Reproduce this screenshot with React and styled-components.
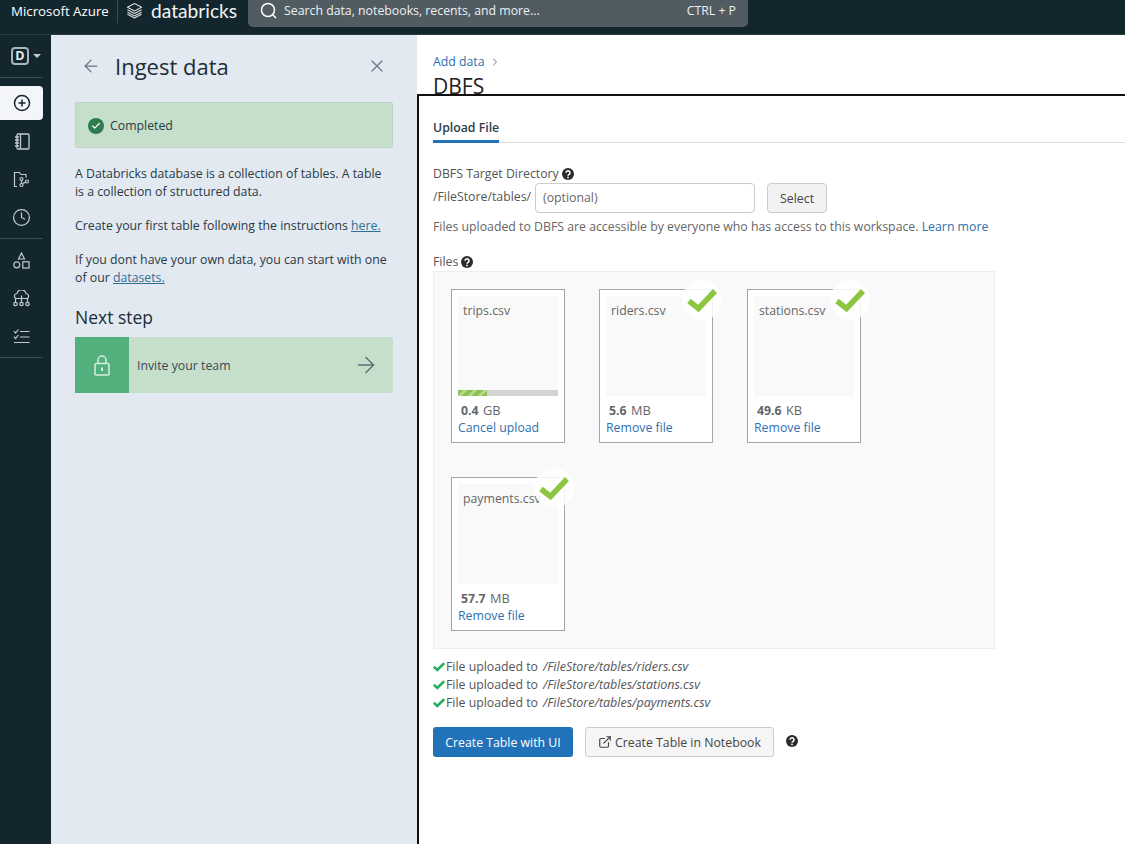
import styled, { createGlobalStyle } from 'styled-components';
import { ArrowLeft, ArrowRight, X, Check, ChevronRight, CirclePlus, Clock, ExternalLink } from 'lucide-react';

const GlobalStyle = createGlobalStyle`
  html, body { margin: 0; padding: 0; height: 100%; overflow: hidden; background: #fff; }
  body { font-family: "Open Sans", "Noto Sans", sans-serif; font-size: 12.3px; color: #333; }
  * { box-sizing: border-box; }
`

const Page = styled.div`
  width: 1125px;
  height: 844px;
  display: flex;
  flex-direction: column;
  overflow: hidden;
`

const TopBar = styled.header`
  height: 35px;
  flex: none;
  background: #13262e;
  border-bottom: 1px solid #2b3b42;
  display: flex;
  align-items: flex-start;
  color: #fff;
`

const Azure = styled.div`
  width: 118px;
  height: 23px;
  padding-left: 11px;
  font-size: 13.3px;
  line-height: 22px;
  border-right: 1px solid #3a4a51;
  white-space: nowrap;
`

const Brand = styled.div`
  width: 130px;
  height: 23px;
  display: flex;
  align-items: center;
  padding: 0 0 2px 8px;
  gap: 8px;
  font-family: "Lato", sans-serif;
  font-size: 19.2px;
  line-height: 21px;
  color: #f2f4f5;
`

const SearchBox = styled.div`
  width: 500px;
  height: 27px;
  background: #515c62;
  border-radius: 0 0 5px 5px;
  display: flex;
  align-items: center;
  padding: 0 12px 6px;
  gap: 7px;
  color: #eef1f2;
`

const SearchText = styled.span`
  flex: 1;
`

const Body = styled.div`
  flex: 1;
  display: flex;
  min-height: 0;
`

const Rail = styled.nav`
  width: 51px;
  flex: none;
  background: #13262e;
  color: #c3cbd0;
`

const WorkspaceRow = styled.div`
  height: 43px;
  width: 43px;
  display: flex;
  align-items: center;
  padding-left: 11px;
  gap: 4px;
  border-bottom: 1px solid #3d4c53;
`

const WorkspaceBadge = styled.div`
  width: 18px;
  height: 18px;
  border: 2px solid #a9b5bb;
  border-radius: 4px;
  color: #e4e8ea;
  font-size: 12.5px;
  font-weight: 700;
  line-height: 14px;
  text-align: center;
`

const Caret = styled.span`
  width: 0;
  height: 0;
  border-left: 4px solid transparent;
  border-right: 4px solid transparent;
  border-top: 4px solid #c3cbd0;
`

const RailGroup = styled.div`
  width: 43px;
  padding: ${(props) => props.first ? '8px 0 4px' : '4px 0'};
  display: flex;
  flex-direction: column;
  gap: 4px;
  border-bottom: 1px solid #3d4c53;
`

const RailItem = styled.div`
  width: 43px;
  height: 34px;
  display: flex;
  align-items: center;
  justify-content: center;
  background: ${(props) => props.active ? '#f3f5f8' : 'transparent'};
  color: ${(props) => props.active ? '#13262e' : '#c3cbd0'};
  border-radius: ${(props) => props.active ? '0 4px 4px 0' : '0'};
`

const Panel = styled.aside`
  width: 366px;
  flex: none;
  background: #e2e9f1;
  padding: 0 24px;
  line-height: 18px;
  color: #2a3a44;
`

const PanelHead = styled.div`
  height: 67px;
  padding-bottom: 6px;
  display: flex;
  align-items: center;
  color: #667784;
`

const PanelTitle = styled.h1`
  flex: 1;
  margin: 0 0 0 14px;
  font-size: 22px;
  font-weight: 500;
  color: #1f2d37;
`

const BackBtn = styled.span`
  display: flex;
  padding-left: 6px;
`

const CloseBtn = styled.span`
  display: flex;
  padding-right: 6px;
`

const Alert = styled.div`
  height: 46px;
  background: #c6dfcb;
  border: 1px solid #bed3c8;
  border-radius: 2px;
  display: flex;
  align-items: center;
  padding: 1px 0 0 12px;
  gap: 6px;
  color: #2a3a44;
`

const AlertDot = styled.span`
  width: 16px;
  height: 16px;
  border-radius: 50%;
  background: #2f7d4f;
  color: #fff;
  display: flex;
  align-items: center;
  justify-content: center;
`

const Para = styled.p`
  margin: ${(props) => props.first ? '17px 0 16px' : '0 0 16px'};

  a { color: #2f6f96; text-decoration: underline; }
`

const NextTitle = styled.h2`
  margin: 18px 0 8px;
  font-size: 17.5px;
  line-height: 24px;
  font-weight: 500;
  color: #1f2d37;
`

const StepCard = styled.div`
  height: 56px;
  background: #c6dfcb;
  border-radius: 2px;
  display: flex;
  align-items: center;
  color: #3a4853;
`

const StepIcon = styled.div`
  width: 54px;
  height: 56px;
  background: #51b07c;
  color: #d5eddd;
  display: flex;
  align-items: center;
  justify-content: center;
`

const StepText = styled.span`
  flex: 1;
  padding: 1px 0 0 8px;
`

const StepArrow = styled.span`
  display: flex;
  padding-right: 14px;
  color: #5f6f7c;
`

const Main = styled.main`
  flex: 1;
  min-width: 0;
  display: flex;
  flex-direction: column;
`

const MainHead = styled.div`
  height: 59px;
  flex: none;
  overflow: hidden;
  padding: 18px 0 0 16px;
`

const Crumb = styled.div`
  display: flex;
  align-items: center;
  gap: 4px;
  line-height: 18px;
  color: #2f70b0;
`

const PageTitle = styled.h2`
  margin: 1px 0 0;
  font-size: 21px;
  line-height: 28px;
  font-weight: 500;
  color: #222;
`

const Frame = styled.div`
  flex: 1;
  border-top: 2px solid #111;
  border-left: 2px solid #111;
  padding-left: 14px;
`

const Tabs = styled.div`
  height: 47px;
  border-bottom: 1px solid #ddd;
  display: flex;
  align-items: flex-end;
`

const Tab = styled.div`
  height: 30px;
  padding-top: 5px;
  margin-bottom: -1px;
  font-weight: 600;
  line-height: 20px;
  color: #2c3e4a;
  border-bottom: 3px solid #2272b9;
`

const Label = styled.div`
  margin-top: 22px;
  height: 18px;
  line-height: 18px;
  display: flex;
  align-items: center;
  gap: 3px;
  color: #555;
`

const DirRow = styled.div`
  display: flex;
  align-items: center;
  gap: 4px;
  height: 30px;
  color: #555;
`

const DirPrefix = styled.span`
  padding-bottom: 4px;
`

const DirInput = styled.div`
  width: 220px;
  height: 30px;
  border: 1px solid #ccc;
  border-radius: 4px;
  padding-left: 7px;
  line-height: 28px;
  color: #666;
`

const SelectBtn = styled.button`
  margin-left: 8px;
  width: 60px;
  height: 30px;
  padding: 0;
  background: #f2f2f2;
  border: 1px solid #ccc;
  border-radius: 4px;
  font: inherit;
  color: #444;
`

const Hint = styled.div`
  margin-top: 5px;
  line-height: 18px;
  color: #666;

  a { color: #2f70b0; }
`

const FilesLabel = styled(Label)`
  margin-top: 17px;
`

const DropZone = styled.div`
  width: 562px;
  height: 378px;
  padding: 17px;
  background: #f9f9f9;
  border: 1px solid #eee;
  display: grid;
  grid-template-columns: repeat(auto-fill, 114px);
  grid-auto-rows: 154px;
  column-gap: 34px;
  row-gap: 34px;
`

const FileCard = styled.div`
  position: relative;
  background: #fff;
  border: 1px solid #a6a6a6;
  padding: 6px;
  color: #666;
`

const Thumb = styled.div`
  position: relative;
  height: 100px;
  background: #f9f9f9;
  padding: 6px 5px;
  line-height: 18px;
  white-space: nowrap;
  overflow: hidden;
`

const ProgressTrack = styled.div`
  position: absolute;
  left: 0;
  right: 0;
  bottom: 0;
  height: 6px;
  background: #d3d3d3;
`

const ProgressFill = styled.div`
  height: 100%;
  background: repeating-linear-gradient(-45deg, #8cc152 0 4px, #b5d98e 4px 7px);
`

const Size = styled.div`
  margin: 6px 0 0 3px;
  font-size: 12.8px;
  line-height: 17px;

  b { font-size: 12.3px; font-weight: 700; color: #666; margin-right: 1px; }
`

const CardLink = styled.a`
  display: block;
  line-height: 17px;
  color: #2f70b0;
`

const CheckBubble = styled.div`
  position: absolute;
  top: -10px;
  right: -10px;
  width: 40px;
  height: 40px;
  border-radius: 50%;
  background: rgba(255, 255, 255, 0.85);
  display: flex;
  align-items: center;
  justify-content: center;
`

const Uploads = styled.div`
  margin-top: 9px;
  line-height: 18px;
  color: #555;
`

const UploadRow = styled.div`
  display: flex;
  align-items: center;
  gap: 1px;
  height: 18px;

  em { margin-left: 4px; font-size: 12.5px; }
`

const Actions = styled.div`
  margin-top: 15px;
  display: flex;
  align-items: flex-start;
  gap: 12px;
`

const PrimaryBtn = styled.button`
  width: 140px;
  height: 30px;
  padding: 0;
  background: #2272b9;
  border: 0;
  border-radius: 3px;
  font: inherit;
  color: #fff;
`

const SecondaryBtn = styled.button`
  width: 189px;
  height: 30px;
  padding: 0;
  background: #f5f5f5;
  border: 1px solid #ccc;
  border-radius: 3px;
  font: inherit;
  color: #444;
  display: flex;
  align-items: center;
  justify-content: center;
  gap: 3px;
`

const ActionHelp = styled.span`
  display: flex;
  margin-top: 8px;
`

const Help = ({ size = 12 }) => (
  <svg width={size} height={size} viewBox="0 0 24 24">
    <circle cx="12" cy="12" r="12" fill="#2b2b2b" />
    <path d="M8 9.5a4 4 0 1 1 6.4 3.2c-1.3.9-2.4 1.5-2.4 3" fill="none" stroke="#fff" strokeWidth="3" />
    <rect x="10.4" y="17.4" width="3.2" height="3.2" fill="#fff" />
  </svg>
)

const SearchGlyph = () => (
  <svg width="17" height="17" viewBox="0 0 17 17" fill="none" stroke="#fff" strokeWidth="1.5">
    <circle cx="8" cy="8" r="6.5" />
    <path d="M12.7 12.7 16 16" />
  </svg>
)

const Layers = () => (
  <svg width="17" height="17" viewBox="0 0 18 18" fill="none" stroke="#d5dadd" strokeWidth="1.1" strokeLinejoin="round">
    <path d="M9 1.5 16.5 5.5 9 9.5 1.5 5.5Z" />
    <path d="M1.5 8.2 9 12.2l7.5-4" />
    <path d="M1.5 10.8 9 14.8l7.5-4" />
    <path d="M1.5 13 9 17l7.5-4" />
  </svg>
)

const Notebook = () => (
  <svg width="16" height="17" viewBox="0 0 16 17" fill="none" stroke="currentColor" strokeWidth="1.3">
    <rect x="3" y="1" width="12" height="15" rx="1" />
    <path d="M6.5 1v15M1 4h4M1 7h4M1 10h4M1 13h4" />
  </svg>
)

const RepoFolder = () => (
  <svg width="17" height="17" viewBox="0 0 17 17" fill="none" stroke="currentColor" strokeWidth="1.2">
    <path d="M4 15.5H1.5v-14h5l1.5 2h5v3" />
    <circle cx="8.5" cy="8" r="1.5" />
    <circle cx="8.5" cy="14" r="1.5" />
    <circle cx="14" cy="10.5" r="1.5" />
    <path d="M8.5 9.5v3M9.8 12.5l2.9-1.4" />
  </svg>
)

const Shapes = () => (
  <svg width="17" height="17" viewBox="0 0 17 17" fill="none" stroke="currentColor" strokeWidth="1.2">
    <path d="M8.5 1 11.5 7h-6Z" />
    <circle cx="3.8" cy="12.8" r="3" />
    <rect x="9.8" y="9.8" width="6.2" height="6.2" />
  </svg>
)

const Cluster = () => (
  <svg width="17" height="17" viewBox="0 0 17 17" fill="none" stroke="currentColor" strokeWidth="1.2">
    <path d="M3 8.5a2.6 2.6 0 0 1 1-5 4.6 4.6 0 0 1 9 0 2.6 2.6 0 0 1 1 5" />
    <path d="M2.5 12V8.5h12V12M8.5 5.5V12" />
    <circle cx="2.5" cy="14" r="1.7" />
    <circle cx="8.5" cy="14" r="1.7" />
    <circle cx="14.5" cy="14" r="1.7" />
  </svg>
)

const Checklist = () => (
  <svg width="17" height="17" viewBox="0 0 17 17" fill="none" stroke="currentColor" strokeWidth="1.2">
    <path d="M1 3.2 2.6 5 5.4 1.5M1 8.7l1.6 1.8 2.8-3.5" />
    <path d="M7 3.5h9.5M7 9h9.5M1 14.5h15.5" />
  </svg>
)

const Padlock = () => (
  <svg width="16" height="21" viewBox="0 0 16 21" fill="none" stroke="currentColor" strokeWidth="1.5">
    <rect x="1" y="8.5" width="14" height="11.5" rx="1" />
    <path d="M4 8.5V5a4 4 0 0 1 8 0v3.5" />
    <path d="M8 12.5v3.5" strokeWidth="2" />
  </svg>
)

const BigCheck = () => (
  <svg width="30" height="24" viewBox="0 0 30 24" fill="none" stroke="#8cc63f" strokeWidth="5.5">
    <path d="M2 13 11.5 20.5 28 3" />
  </svg>
)

const SmallCheck = () => (
  <svg width="12" height="10" viewBox="0 0 12 10" fill="none" stroke="#27ae60" strokeWidth="2.6">
    <path d="M.8 4.8 4.3 8 11.2 1.2" />
  </svg>
)

const files = [
  { name: 'trips.csv', value: '0.4', unit: 'GB', link: 'Cancel upload', progress: 29 },
  { name: 'riders.csv', value: '5.6', unit: 'MB', link: 'Remove file', done: true },
  { name: 'stations.csv', value: '49.6', unit: 'KB', link: 'Remove file', done: true },
  { name: 'payments.csv', value: '57.7', unit: 'MB', link: 'Remove file', done: true },
]

const uploaded = ['riders', 'stations', 'payments']

function App() {
  return (
    <Page>
      <GlobalStyle />
      <TopBar>
        <Azure>Microsoft Azure</Azure>
        <Brand><Layers />databricks</Brand>
        <SearchBox>
          <SearchGlyph />
          <SearchText>Search data, notebooks, recents, and more...</SearchText>
          <span>CTRL + P</span>
        </SearchBox>
      </TopBar>
      <Body>
        <Rail>
          <WorkspaceRow>
            <WorkspaceBadge>D</WorkspaceBadge>
            <Caret />
          </WorkspaceRow>
          <RailGroup first>
            <RailItem active><CirclePlus size={18} strokeWidth={2} /></RailItem>
            <RailItem><Notebook /></RailItem>
            <RailItem><RepoFolder /></RailItem>
            <RailItem><Clock size={19} strokeWidth={1.5} /></RailItem>
          </RailGroup>
          <RailGroup>
            <RailItem><Shapes /></RailItem>
            <RailItem><Cluster /></RailItem>
            <RailItem><Checklist /></RailItem>
          </RailGroup>
        </Rail>
        <Panel>
          <PanelHead>
            <BackBtn><ArrowLeft size={20} strokeWidth={1.5} /></BackBtn>
            <PanelTitle>Ingest data</PanelTitle>
            <CloseBtn><X size={20} strokeWidth={1.5} /></CloseBtn>
          </PanelHead>
          <Alert>
            <AlertDot><Check size={10} strokeWidth={3} /></AlertDot>
            Completed
          </Alert>
          <Para first>A Databricks database is a collection of tables. A table is a collection of structured data.</Para>
          <Para>Create your first table following the instructions <a>here.</a></Para>
          <Para>If you dont have your own data, you can start with one of our <a>datasets.</a></Para>
          <NextTitle>Next step</NextTitle>
          <StepCard>
            <StepIcon><Padlock /></StepIcon>
            <StepText>Invite your team</StepText>
            <StepArrow><ArrowRight size={26} strokeWidth={1.4} /></StepArrow>
          </StepCard>
        </Panel>
        <Main>
          <MainHead>
            <Crumb>Add data <ChevronRight size={12} color="#777" /></Crumb>
            <PageTitle>DBFS</PageTitle>
          </MainHead>
          <Frame>
            <Tabs><Tab>Upload File</Tab></Tabs>
            <Label>DBFS Target Directory <Help /></Label>
            <DirRow>
              <DirPrefix>/FileStore/tables/</DirPrefix>
              <DirInput>(optional)</DirInput>
              <SelectBtn>Select</SelectBtn>
            </DirRow>
            <Hint>Files uploaded to DBFS are accessible by everyone who has access to this workspace. <a>Learn more</a></Hint>
            <FilesLabel>Files <Help /></FilesLabel>
            <DropZone>
              {files.map((file) => (
                <FileCard key={file.name}>
                  <Thumb>
                    {file.name}
                    {file.progress && (
                      <ProgressTrack>
                        <ProgressFill style={{ width: `${file.progress}%` }} />
                      </ProgressTrack>
                    )}
                  </Thumb>
                  <Size><b>{file.value}</b> {file.unit}</Size>
                  <CardLink>{file.link}</CardLink>
                  {file.done && <CheckBubble><BigCheck /></CheckBubble>}
                </FileCard>
              ))}
            </DropZone>
            <Uploads>
              {uploaded.map((name) => (
                <UploadRow key={name}>
                  <SmallCheck />
                  File uploaded to <em>/FileStore/tables/{name}.csv</em>
                </UploadRow>
              ))}
            </Uploads>
            <Actions>
              <PrimaryBtn>Create Table with UI</PrimaryBtn>
              <SecondaryBtn><ExternalLink size={14} />Create Table in Notebook</SecondaryBtn>
              <ActionHelp><Help /></ActionHelp>
            </Actions>
          </Frame>
        </Main>
      </Body>
    </Page>
  )
}

export default App
